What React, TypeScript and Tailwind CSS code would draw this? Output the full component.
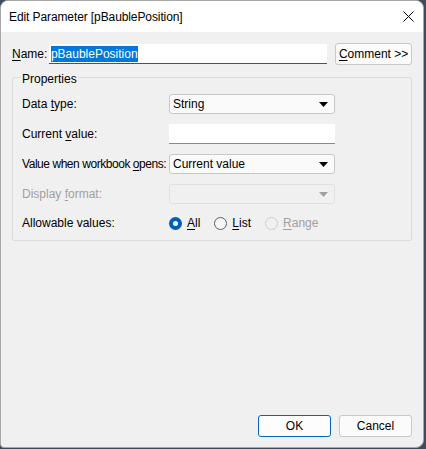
import React from "react";

const font = { fontFamily: '"Liberation Sans", Arial, sans-serif' };

function Caret({ disabled }: { disabled?: boolean }) {
  return (
    <svg width="9" height="5" viewBox="0 0 9 5" className="absolute right-[6px] top-[7px]">
      <path d="M0 0 H9 L4.5 5 Z" fill={disabled ? "#a0a0a0" : "#000"} />
    </svg>
  );
}

function Combo({ value, disabled }: { value?: string; disabled?: boolean }) {
  return (
    <div
      className={`relative w-[166px] h-[20px] rounded-[3px] border ${
        disabled ? "border-[#e0e0e0] bg-[#f0f0f0]" : "border-[#c8c8c8] bg-[#fafafa]"
      } pl-[3px] text-[12px] leading-[18px] text-black whitespace-nowrap`}
    >
      {value}
      <Caret disabled={disabled} />
    </div>
  );
}

function Radio({ u, rest, checked, disabled }: { u: string; rest: string; checked?: boolean; disabled?: boolean }) {
  return (
    <div className="flex items-center gap-[5px]">
      {checked ? (
        <div className="w-[13px] h-[13px] rounded-full bg-[#005fb8] flex items-center justify-center">
          <div className="w-[5px] h-[5px] rounded-full bg-white" />
        </div>
      ) : (
        <div
          className={`w-[13px] h-[13px] rounded-full border ${
            disabled ? "border-[#cfcfcf] bg-[#f0f0f0]" : "border-[#606060] bg-[#f5f5f5]"
          }`}
        />
      )}
      <span className={disabled ? "text-[#a0a0a0]" : "text-black"}>
        <span className="underline underline-offset-2">{u}</span>
        {rest}
      </span>
    </div>
  );
}

export default function App() {
  return (
    <div className="w-[426px] h-[449px] bg-[#3d4b5c] text-[12px] whitespace-nowrap" style={font}>
      <div className="w-[424px] h-[448px] border border-[#a8a8a8] rounded-t-[8px] rounded-br-[8px] rounded-bl-[4px] overflow-hidden flex flex-col bg-[#f0f0f0]">
        <div className="h-[31px] bg-white flex items-center justify-between pl-[8px] pr-[9px]">
          <span className="text-black text-[12px] mt-[1px] tracking-[-0.1px]">Edit Parameter [pBaublePosition]</span>
          <svg width="11" height="11" viewBox="0 0 11 11">
            <path d="M0.5 0.5 L10.5 10.5 M10.5 0.5 L0.5 10.5" stroke="#000" strokeWidth="1" />
          </svg>
        </div>
        <div className="flex-1 flex flex-col px-[11px] pt-[11px] pb-[10px]">
          <div className="flex items-center h-[22px]">
            <span className="w-[37px] text-black">
              <span className="underline underline-offset-2">N</span>ame:
            </span>
            <div className="w-[279px] h-[20px] bg-white border-b border-[#0067c0] flex items-center pl-[2px]">
              <span className="bg-[#0078d7] text-white leading-[16px]">pBaublePosition</span>
            </div>
            <div className="ml-[8px] w-[77px] h-[22px] rounded-[3px] border border-[#c8c8c8] bg-[#fbfbfb] flex items-center justify-center text-black">
              <span>
                <span className="underline underline-offset-2">C</span>omment &gt;&gt;
              </span>
            </div>
          </div>
          <div className="relative mt-[12px] h-[164px] border border-[#dcdcdc] rounded-[2px] pl-[9px] pt-[11px]">
            <span className="absolute left-[8px] -top-[8px] bg-[#f0f0f0] px-[1px] text-black">Properties</span>
            <div className="flex flex-col">
              <div className="flex items-center h-[30px]">
                <span className="w-[147px] text-black">Data <span className="underline underline-offset-2">t</span>ype:</span>
                <Combo value="String" />
              </div>
              <div className="flex items-center h-[30px]">
                <span className="w-[147px] text-black">Current <span className="underline underline-offset-2">v</span>alue:</span>
                <div className="w-[166px] h-[20px] bg-white border-b border-[#8a8a8a]" />
              </div>
              <div className="flex items-center h-[30px]">
                <span className="w-[147px] text-black tracking-[-0.45px]">Value when workbook <span className="underline underline-offset-2">o</span>pens:</span>
                <Combo value="Current value" />
              </div>
              <div className="flex items-center h-[30px]">
                <span className="w-[147px] text-[#a0a0a0]">Display <span className="underline underline-offset-2">f</span>ormat:</span>
                <Combo disabled />
              </div>
              <div className="flex items-center h-[28px]">
                <span className="w-[147px] text-black">Allowable values:</span>
                <div className="flex items-center gap-[14px]">
                  <Radio u="A" rest="ll" checked />
                  <Radio u="L" rest="ist" />
                  <Radio u="R" rest="ange" disabled />
                </div>
              </div>
            </div>
          </div>
          <div className="flex-1" />
          <div className="flex justify-end gap-[8px]">
            <div className="w-[73px] h-[22px] rounded-[3px] border border-[#0067c0] bg-[#fdfdfd] flex items-center justify-center text-black">OK</div>
            <div className="w-[73px] h-[22px] rounded-[3px] border border-[#c8c8c8] bg-[#fbfbfb] flex items-center justify-center text-black">Cancel</div>
          </div>
        </div>
      </div>
    </div>
  );
}
